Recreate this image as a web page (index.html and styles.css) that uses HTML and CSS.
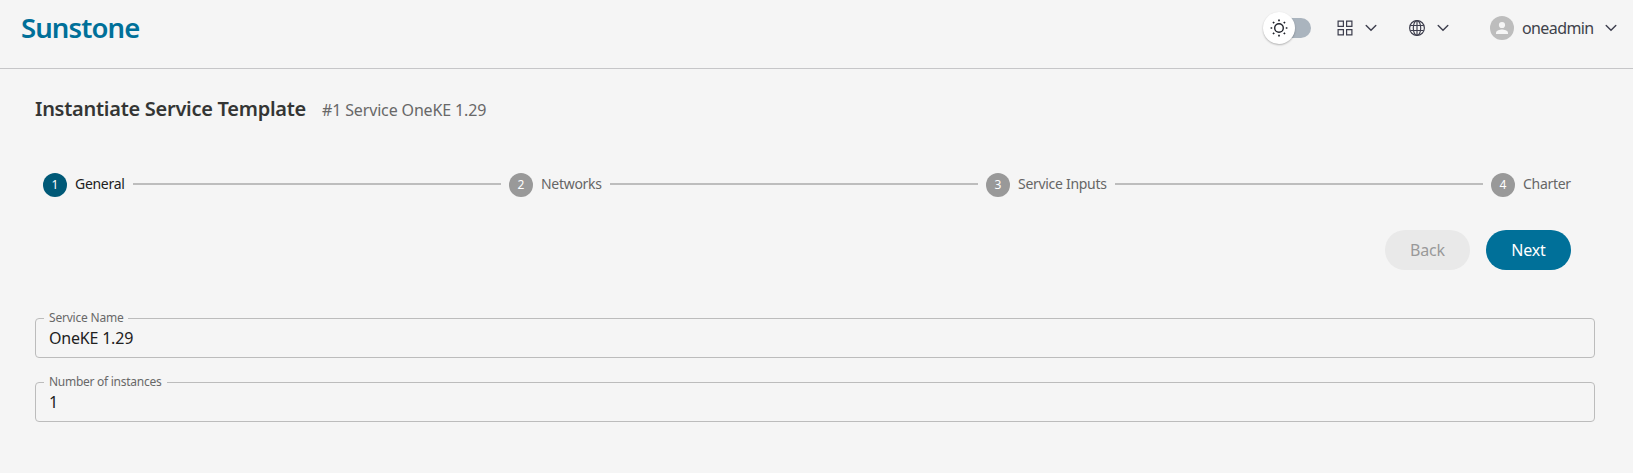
FILE: index.html
```html
<!DOCTYPE html>
<html lang="en">
<head>
<meta charset="utf-8">
<title>Sunstone</title>
<link rel="stylesheet" href="styles.css">
</head>
<body>
<header class="topbar">
  <div class="brand">Sunstone</div>
  <div class="actions">
    <div class="theme-switch">
      <span class="thumb">
        <svg width="20" height="20" viewBox="0 0 20 20" fill="none" stroke="#20232b" stroke-width="1.4"><circle cx="10" cy="10" r="4.3"/><path stroke-width="1.7" d="M10 1.6v1.6M10 16.8v1.6M1.6 10h1.6M16.8 10h1.6M4 4l1.2 1.2M14.8 14.8l1.2 1.2M4 16l1.2-1.2M14.8 5.2L16 4"/></svg>
      </span>
    </div>
    <div class="menu apps">
      <svg width="16" height="16" viewBox="0 0 16 16" fill="none" stroke="#3d3e4d" stroke-width="1.2"><path d="M1.1 1.1h5.3v5.3H1.1zM9.6 1.1h5.3v5.3H9.6zM1.1 9.6h5.3v5.3H1.1zM9.6 9.6h5.3v5.3H9.6z"/></svg>
      <svg class="chevron" width="12" height="8" viewBox="0 0 12 8"><path d="M1.2 1.5L6 6.2l4.8-4.7"/></svg>
    </div>
    <div class="menu language">
      <svg width="16" height="16" viewBox="0 0 16 16" fill="none" stroke="#3d3e4d" stroke-width="1.15"><circle cx="8" cy="8" r="7.4"/><ellipse cx="8" cy="8" rx="3.7" ry="7.4"/><path d="M8 .6v14.8M1.3 5.5h13.4M1.3 10.5h13.4"/></svg>
      <svg class="chevron" width="12" height="8" viewBox="0 0 12 8"><path d="M1.2 1.5L6 6.2l4.8-4.7"/></svg>
    </div>
    <div class="menu user">
      <svg width="24" height="24" viewBox="0 0 24 24"><circle cx="12" cy="12" r="12" fill="#bdbdbd"/><circle cx="12" cy="9" r="3.1" fill="#f5f5f5"/><path d="M6 18v-1.4c0-2 4-3.1 6-3.1s6 1.1 6 3.1V18z" fill="#f5f5f5"/></svg>
      <span class="username">oneadmin</span>
      <svg class="chevron" width="12" height="8" viewBox="0 0 12 8"><path d="M1.2 1.5L6 6.2l4.8-4.7"/></svg>
    </div>
  </div>
</header>
<main class="page">
  <div class="heading">
    <h1 class="title">Instantiate Service Template</h1>
    <span class="subtitle">#1 Service OneKE 1.29</span>
  </div>
  <div class="stepper">
    <div class="step active"><span class="num">1</span><span class="label general">General</span></div>
    <div class="line"></div>
    <div class="step"><span class="num">2</span><span class="label networks">Networks</span></div>
    <div class="line"></div>
    <div class="step"><span class="num">3</span><span class="label inputs">Service Inputs</span></div>
    <div class="line"></div>
    <div class="step"><span class="num">4</span><span class="label charter">Charter</span></div>
  </div>
  <div class="buttons">
    <button class="btn back" disabled>Back</button>
    <button class="btn next">Next</button>
  </div>
  <form class="form">
    <fieldset class="field"><legend class="name-legend">Service Name</legend><div class="value">OneKE 1.29</div></fieldset>
    <fieldset class="field"><legend class="count-legend">Number of instances</legend><div class="value">1</div></fieldset>
  </form>
</main>
</body>
</html>
```
FILE: styles.css
```css
* { box-sizing: border-box; }
body { margin: 0; background: #f5f5f5; color: #212121; font-family: "Noto Sans", "Open Sans", sans-serif; font-size: 16px; }
svg { display: block; flex: none; }
.topbar { display: flex; justify-content: space-between; height: 69px; padding: 0 16px 0 21px; border-bottom: 1px solid #c6c6c8; }
.brand { height: 56px; line-height: 55px; font-size: 27.5px; font-weight: 600; letter-spacing: -0.9px; color: #007099; white-space: nowrap; }
.actions { display: flex; align-items: center; height: 56px; }
.theme-switch { width: 46px; height: 20px; margin-right: 26px; background: linear-gradient(#aab4be, #aab4be) right / 36px 20px no-repeat; border-radius: 10px; display: flex; align-items: center; }
.thumb { width: 32px; height: 32px; margin-left: -2px; flex: none; border-radius: 50%; background: #fff; box-shadow: 0 1px 2px rgba(0,0,0,.28); display: flex; align-items: center; justify-content: center; }
.menu { display: flex; align-items: center; gap: 12px; }
.apps { margin-right: 32px; }
.language { margin-right: 41px; }
.chevron { fill: none; stroke: #3d3e4d; stroke-width: 1.4; stroke-linecap: round; }
.user { gap: 0; }
.username { width: 71px; margin: 0 12px 0 8px; color: #40424a; letter-spacing: -0.6px; white-space: nowrap; }
.page { padding: 26px 38px 0 35px; }
.heading { display: flex; align-items: baseline; height: 28px; white-space: nowrap; }
.title { width: 287px; margin: 0; font-size: 20px; line-height: 28px; font-weight: 600; letter-spacing: -0.27px; color: #343534; }
.subtitle { color: #686868; letter-spacing: -0.15px; }
.stepper { display: flex; align-items: center; gap: 8px; margin: 50px 24px 0 8px; height: 24px; }
.step { display: flex; align-items: center; gap: 8px; flex: none; }
.num { width: 24px; height: 24px; line-height: 24px; border-radius: 50%; background: #999; color: #fff; font-size: 12px; text-align: center; }
.label { font-size: 14px; line-height: 22px; margin-bottom: 2px; color: #666; white-space: nowrap; }
.active .num { background: #005977; }
.active .label { color: #212121; }
.general { width: 50px; letter-spacing: -.3px; }
.networks { width: 61px; letter-spacing: -.3px; }
.inputs { width: 89px; letter-spacing: -.3px; }
.charter { width: 48px; letter-spacing: -.3px; }
.line { flex: 1; height: 2px; margin-bottom: 2px; background: #bdbdbd; }
.buttons { display: flex; justify-content: flex-end; gap: 16px; margin: 33px 24px 0 0; }
.btn { width: 85px; height: 40px; padding: 0; border: 0; border-radius: 20px; font: 16px "Noto Sans", sans-serif; letter-spacing: -.2px; }
.back { background: #e9e9e9; color: #999; }
.next { background: #007099; color: #fff; }
.form { display: flex; flex-direction: column; gap: 18px; margin-top: 42px; }
.field { height: 46px; min-width: 0; margin: 0; padding: 0 13px 0 8px; border: 1px solid #bcbcbc; border-radius: 4px; }
.field legend { height: 12px; padding: 0 5px; line-height: 11px; font-size: 12px; color: #686868; white-space: nowrap; }
.name-legend { width: 84px; letter-spacing: -.2px; }
.count-legend { width: 123px; letter-spacing: -.27px; }
.value { padding-left: 5px; line-height: 28px; letter-spacing: -.2px; }
```
